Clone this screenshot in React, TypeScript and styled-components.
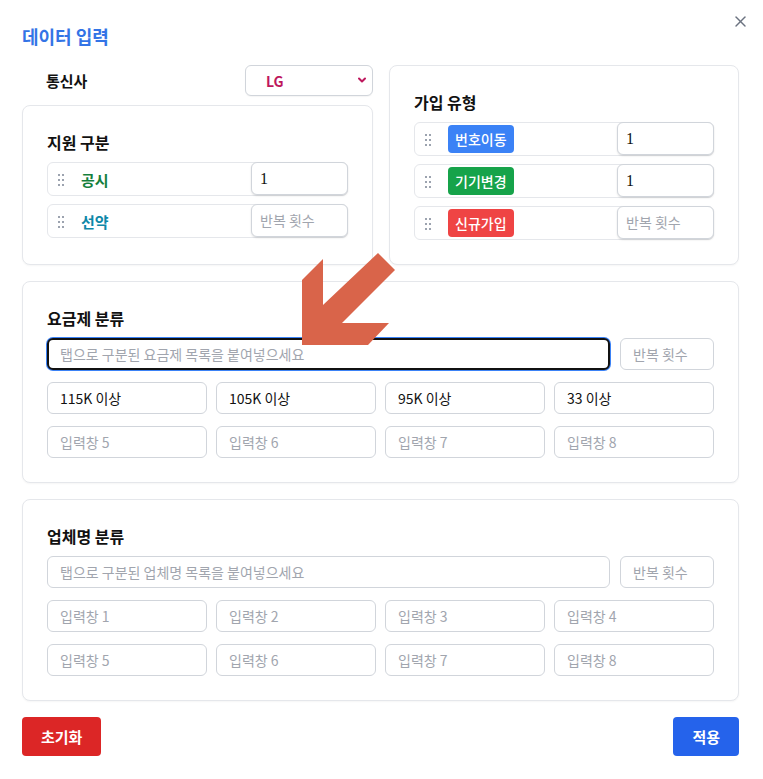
import React from "react";
import styled, { createGlobalStyle } from "styled-components";

const GlobalStyle = createGlobalStyle`
  html, body { margin: 0; padding: 0; background: #ffffff; }
  body { font-family: "Noto Sans CJK KR", "Noto Sans", sans-serif; color: #111827; }
  * { box-sizing: border-box; }
`;

const Dialog = styled.div`
  position: relative;
  width: 763px;
  height: 779px;
  padding: 22px 24px 23px 22px;
  display: flex;
  flex-direction: column;
  gap: 16px;
  background: #fff;
`;

const CloseButton = styled.button`
  position: absolute;
  top: 14px;
  right: 16px;
  width: 14px;
  height: 14px;
  padding: 0;
  border: none;
  background: transparent;
  display: flex;
  align-items: center;
  justify-content: center;
  color: #6b7280;
  cursor: pointer;
`;

const Title = styled.h2`
  margin: 0 0 -1px;
  font-size: 18px;
  line-height: 28px;
  font-weight: 700;
  color: #3374e6;
`;

const TopGrid = styled.div`
  display: grid;
  grid-template-columns: 351px 1fr;
  gap: 16px;
`;

const LeftCol = styled.div`
  display: flex;
  flex-direction: column;
  gap: 9px;
`;

const CarrierRow = styled.div`
  display: flex;
  align-items: center;
  justify-content: space-between;
  padding-left: 24px;
  height: 31px;
`;

const FieldLabel = styled.span`
  font-size: 15px;
  font-weight: 700;
  color: #111;
`;

const SelectWrap = styled.div`
  position: relative;
  width: 128px;
  height: 31px;
`;

const Select = styled.select`
  appearance: none;
  -webkit-appearance: none;
  width: 100%;
  height: 100%;
  border: 1px solid #d1d5db;
  border-radius: 6px;
  background: #fff;
  padding: 0 24px 0 20px;
  font-family: "Noto Sans CJK KR", sans-serif;
  font-size: 14px;
  font-weight: 700;
  color: #be185d;
  box-shadow: 0 1px 1px rgba(0, 0, 0, 0.04);
`;

const SelectChevron = styled.svg`
  position: absolute;
  right: 7px;
  top: 12px;
  pointer-events: none;
`;

const Card = styled.section<{ $grow?: boolean }>`
  border: 1px solid #e5e7eb;
  border-radius: 8px;
  padding: 24px;
  background: #fff;
  box-shadow: 0 1px 2px rgba(0, 0, 0, 0.04);
  display: flex;
  flex-direction: column;
  ${(p) => (p.$grow ? "flex: 1;" : "")}
`;

const CardTitle = styled.h3`
  margin: 0 0 8px;
  font-size: 16px;
  line-height: 24px;
  font-weight: 700;
  color: #111;
`;

const RowList = styled.div`
  display: flex;
  flex-direction: column;
  gap: 8px;
`;

const ItemRow = styled.div`
  display: flex;
  align-items: center;
  height: 34px;
  border: 1px solid #e5e7eb;
  border-radius: 6px;
  background: #fff;
  padding-left: 9px;
`;

const Handle = styled.span`
  display: flex;
  align-items: center;
  width: 14px;
  margin-right: 10px;
  color: #9ca3af;
`;

const ItemLabel = styled.span<{ $color: string }>`
  flex: 1;
  font-size: 15px;
  font-weight: 700;
  color: ${(p) => p.$color};
`;

const BadgeSlot = styled.span`
  flex: 1;
  display: flex;
`;

const Badge = styled.span<{ $bg: string }>`
  display: inline-flex;
  align-items: center;
  height: 28px;
  padding: 0 7px;
  border-radius: 4px;
  background: ${(p) => p.$bg};
  color: #fff;
  font-size: 14px;
  font-weight: 500;
`;

const CountInput = styled.input`
  width: 97px;
  height: 33px;
  margin-right: -1px;
  margin-top: -1px;
  border: 1px solid #d1d5db;
  border-radius: 6px;
  padding: 0 8px;
  font-family: "Liberation Serif", "Noto Sans CJK KR", serif;
  font-size: 16px;
  color: #111;
  background: #fff;
  box-shadow: 0 1px 2px rgba(0, 0, 0, 0.12);
  &::placeholder {
    font-family: "Noto Sans CJK KR", sans-serif;
    font-size: 14px;
    color: #a1a5ae;
  }
`;

const PasteRow = styled.div`
  display: grid;
  grid-template-columns: 1fr 94px;
  gap: 10px;
  margin-bottom: 12px;
`;

const SlotGrid = styled.div`
  display: grid;
  grid-template-columns: repeat(4, 1fr);
  column-gap: 9px;
  row-gap: 12px;
`;

const TextInput = styled.input<{ $focused?: boolean }>`
  width: 100%;
  height: 32px;
  border: ${(p) => (p.$focused ? "2px solid #111" : "1px solid #d1d5db")};
  border-radius: 6px;
  padding: 0 ${(p) => (p.$focused ? "11px" : "12px")};
  font-family: "Noto Sans CJK KR", sans-serif;
  font-size: 14px;
  color: #111;
  background: #fff;
  outline: none;
  box-shadow: ${(p) => (p.$focused ? "0 0 0 1px #3b82f6" : "none")};
  &::placeholder {
    color: #a1a5ae;
  }
`;

const Footer = styled.div`
  display: flex;
  justify-content: space-between;
  align-items: center;
`;

const ActionButton = styled.button<{ $bg: string }>`
  height: 39px;
  padding: 0 19px;
  border: none;
  border-radius: 4px;
  background: ${(p) => p.$bg};
  color: #fff;
  font-family: "Noto Sans CJK KR", sans-serif;
  font-size: 15px;
  font-weight: 700;
  cursor: pointer;
`;

const ArrowOverlay = styled.svg`
  position: absolute;
  left: 302px;
  top: 253px;
  pointer-events: none;
`;

const GripIcon = () => (
  <svg width="8" height="13" viewBox="0 0 8 13" fill="currentColor">
    <rect x="1" y="1" width="2" height="2" />
    <rect x="5" y="1" width="2" height="2" />
    <rect x="1" y="6" width="2" height="2" />
    <rect x="5" y="6" width="2" height="2" />
    <rect x="1" y="11" width="2" height="2" />
    <rect x="5" y="11" width="2" height="2" />
  </svg>
);

const supportItems = [
  { label: "공시", color: "#15803d", value: "1" },
  { label: "선약", color: "#0e87a8", value: "" },
];

const joinItems = [
  { label: "번호이동", bg: "#3b82f6", value: "1" },
  { label: "기기변경", bg: "#16a34a", value: "1" },
  { label: "신규가입", bg: "#ef4444", value: "" },
];

const planValues = ["115K 이상", "105K 이상", "95K 이상", "33 이상", "", "", "", ""];
const vendorValues = ["", "", "", "", "", "", "", ""];

export default function App() {
  return (
    <>
      <GlobalStyle />
      <Dialog>
        <CloseButton aria-label="닫기">
          <svg width="11" height="11" viewBox="0 0 11 11" stroke="currentColor" strokeWidth="1.4" strokeLinecap="round">
            <line x1="1" y1="1" x2="10" y2="10" />
            <line x1="10" y1="1" x2="1" y2="10" />
          </svg>
        </CloseButton>
        <Title>데이터 입력</Title>

        <TopGrid>
          <LeftCol>
            <CarrierRow>
              <FieldLabel>통신사</FieldLabel>
              <SelectWrap>
                <Select defaultValue="LG">
                  <option value="SKT">SKT</option>
                  <option value="KT">KT</option>
                  <option value="LG">LG</option>
                </Select>
                <SelectChevron width="8" height="6" viewBox="0 0 8 6" fill="none" stroke="#be185d" strokeWidth="2" strokeLinecap="round" strokeLinejoin="round">
                  <polyline points="1,1.5 4,4.5 7,1.5" />
                </SelectChevron>
              </SelectWrap>
            </CarrierRow>
            <Card $grow>
              <CardTitle>지원 구분</CardTitle>
              <RowList>
                {supportItems.map((it) => (
                  <ItemRow key={it.label}>
                    <Handle><GripIcon /></Handle>
                    <ItemLabel $color={it.color}>{it.label}</ItemLabel>
                    <CountInput defaultValue={it.value} placeholder="반복 횟수" />
                  </ItemRow>
                ))}
              </RowList>
            </Card>
          </LeftCol>

          <Card>
            <CardTitle>가입 유형</CardTitle>
            <RowList>
              {joinItems.map((it) => (
                <ItemRow key={it.label}>
                  <Handle><GripIcon /></Handle>
                  <BadgeSlot>
                    <Badge $bg={it.bg}>{it.label}</Badge>
                  </BadgeSlot>
                  <CountInput defaultValue={it.value} placeholder="반복 횟수" />
                </ItemRow>
              ))}
            </RowList>
          </Card>
        </TopGrid>

        <Card>
          <CardTitle>요금제 분류</CardTitle>
          <PasteRow>
            <TextInput $focused placeholder="탭으로 구분된 요금제 목록을 붙여넣으세요" />
            <TextInput placeholder="반복 횟수" />
          </PasteRow>
          <SlotGrid>
            {planValues.map((v, i) => (
              <TextInput key={i} defaultValue={v} placeholder={`입력창 ${i + 1}`} />
            ))}
          </SlotGrid>
        </Card>

        <Card>
          <CardTitle>업체명 분류</CardTitle>
          <PasteRow>
            <TextInput placeholder="탭으로 구분된 업체명 목록을 붙여넣으세요" />
            <TextInput placeholder="반복 횟수" />
          </PasteRow>
          <SlotGrid>
            {vendorValues.map((v, i) => (
              <TextInput key={i} defaultValue={v} placeholder={`입력창 ${i + 1}`} />
            ))}
          </SlotGrid>
        </Card>

        <Footer>
          <ActionButton $bg="#dc2626">초기화</ActionButton>
          <ActionButton $bg="#2563eb">적용</ActionButton>
        </Footer>

        <ArrowOverlay width="94" height="93" viewBox="0 0 94 93">
          <polygon
            points="0,92 0,27 21,6 21,52 76,0 93,17 40,70 87,70 66,92"
            fill="#d9644a"
          />
        </ArrowOverlay>
      </Dialog>
    </>
  );
}
